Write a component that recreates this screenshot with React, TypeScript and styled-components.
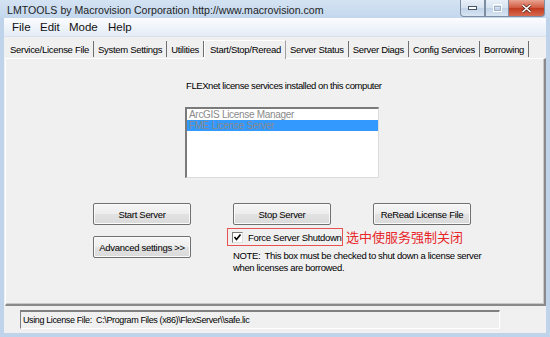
import React from 'react'
import styled, { createGlobalStyle } from 'styled-components'

const GlobalStyle = createGlobalStyle`
  html, body {
    margin: 0;
    padding: 0;
    background: #f0f0f0;
  }
  body {
    font-family: 'Liberation Sans', Arial, sans-serif;
  }
`

const Window = styled.div`
  width: 550px;
  height: 337px;
  box-sizing: border-box;
  display: flex;
  flex-direction: column;
  background: #bfd4ea;
  padding: 0 4px 4px 4px;
  overflow: hidden;
`

const TitleBar = styled.div`
  height: 18px;
  display: flex;
  align-items: center;
  justify-content: space-between;
  margin: 0 -4px;
  padding-left: 7px;
  background: linear-gradient(#d4e3f3, #c3d7ed);
`

const Title = styled.div`
  font-size: 10.6px;
  color: #1e1e1e;
  padding-top: 2px;
  white-space: nowrap;
`

const Controls = styled.div`
  display: flex;
  align-self: flex-start;
  margin-right: 5px;
`

const CtlButton = styled.div<{ $close?: boolean; $w: number }>`
  width: ${(p) => p.$w}px;
  height: 17px;
  box-sizing: border-box;
  border: 1px solid #7d8ea3;
  border-top: none;
  border-left-width: ${(p) => (p.$close ? 0 : 1)}px;
  display: flex;
  align-items: center;
  justify-content: center;
  background: ${(p) =>
    p.$close
      ? 'linear-gradient(#e8a493, #d1573c 50%, #c23a1f 51%, #d66a4e)'
      : 'linear-gradient(#e9f0f8, #d5e2f0 50%, #c1d3e8 51%, #d8e5f2)'};
  &:first-child {
    border-bottom-left-radius: 4px;
  }
  &:last-child {
    border-bottom-right-radius: 4px;
  }
`

const MenuBar = styled.div`
  height: 18px;
  display: flex;
  align-items: center;
  padding-left: 4px;
  background: linear-gradient(#fbfcfe, #e4ecf6);
  border-bottom: 1px solid #d8e1ec;
`

const MenuItem = styled.span<{ $w: number }>`
  font-size: 11.5px;
  color: #111;
  width: ${(p) => p.$w}px;
  padding-left: 4px;
  box-sizing: border-box;
`

const Client = styled.div`
  flex: 1;
  display: flex;
  flex-direction: column;
  background: #f0f0f0;
`

const TabRow = styled.div`
  height: 19px;
  display: flex;
  align-items: flex-end;
  padding-left: 2px;
  margin-top: 2px;
`

const Tab = styled.div<{ $active?: boolean }>`
  flex-shrink: 0;
  white-space: nowrap;
  font-size: 9.5px;
  letter-spacing: -0.3px;
  color: #000;
  box-sizing: border-box;
  height: ${(p) => (p.$active ? 19 : 16)}px;
  display: flex;
  align-items: center;
  padding: ${(p) => (p.$active ? '0 4px 2px 5px' : '0 4px 0 4px')};
  border-right: 1px solid ${(p) => (p.$active ? '#a0a0a0' : '#6f6f6f')};
  border-top: ${(p) => (p.$active ? '1px solid #ffffff' : 'none')};
  border-left: ${(p) => (p.$active ? '1px solid #ffffff' : 'none')};
  margin-bottom: ${(p) => (p.$active ? -1 : 1)}px;
  background: #f0f0f0;
  position: relative;
  z-index: ${(p) => (p.$active ? 2 : 1)};
`

const Panel = styled.div`
  height: 248px;
  box-sizing: border-box;
  border-top: 1px solid #ffffff;
  border-left: 1px solid #ffffff;
  border-right: 2px solid #8a8a8a;
  border-bottom: 2px solid #8a8a8a;
  box-shadow: inset -1px -1px 0 #c8c8c8;
  margin-left: 1px;
  padding-top: 21px;
  display: flex;
  flex-direction: column;
`

const ServiceBlock = styled.div`
  margin-left: 179px;
  width: 194px;
  display: flex;
  flex-direction: column;
`

const Caption = styled.div`
  font-size: 9.5px;
  letter-spacing: -0.42px;
  color: #000;
  white-space: nowrap;
  padding-left: 1px;
  height: 14px;
`

const ListBox = styled.div`
  margin-top: 13px;
  height: 71px;
  box-sizing: border-box;
  background: #fff;
  border-top: 2px solid #7a7a7a;
  border-left: 2px solid #7a7a7a;
  border-right: 1px solid #dcdcdc;
  border-bottom: 1px solid #dcdcdc;
`

const ListItem = styled.div<{ $selected?: boolean }>`
  height: 11px;
  line-height: 11px;
  font-size: 10px;
  letter-spacing: -0.3px;
  color: #8a8a8a;
  padding-left: 2px;
  background: ${(p) => (p.$selected ? '#3399ff' : 'transparent')};
  white-space: nowrap;
`

const ButtonGrid = styled.div`
  margin-top: 25px;
  margin-left: 87px;
  display: grid;
  grid-template-columns: 98px 98px 98px;
  column-gap: 42px;
`

const Button = styled.div<{ $top?: number }>`
  height: 22px;
  box-sizing: border-box;
  margin-top: ${(p) => p.$top ?? 0}px;
  border: 1px solid #707070;
  border-radius: 2px;
  background: linear-gradient(#f6f6f6, #ededed 50%, #e2e2e2 51%, #dadada);
  box-shadow: inset 0 0 0 1px #fbfbfb;
  display: flex;
  align-items: center;
  justify-content: center;
  font-size: 9.5px;
  letter-spacing: -0.3px;
  color: #000;
  white-space: nowrap;
`

const ForceArea = styled.div`
  grid-column: 2 / span 2;
  margin-left: -6px;
  margin-top: 3px;
  display: flex;
  flex-direction: column;
`

const ForceRow = styled.div`
  display: flex;
  align-items: center;
`

const RedBox = styled.div`
  width: 116px;
  height: 18px;
  box-sizing: border-box;
  border: 1px solid #e8514f;
  display: flex;
  align-items: center;
  padding-left: 4px;
  gap: 5px;
  font-size: 9.5px;
  letter-spacing: -0.3px;
  color: #000;
  white-space: nowrap;
`

const Check = styled.div`
  width: 11px;
  height: 11px;
  box-sizing: border-box;
  border-top: 1px solid #7a7a7a;
  border-left: 1px solid #7a7a7a;
  border-right: 1px solid #e0e0e0;
  border-bottom: 1px solid #e0e0e0;
  background: #fff;
  display: flex;
  align-items: center;
  justify-content: center;
`

const Annotation = styled.span`
  font-family: 'Noto Sans CJK SC', 'Noto Sans', sans-serif;
  font-size: 13px;
  color: #e8262a;
  margin-left: 3px;
  white-space: nowrap;
  line-height: 16px;
`

const Note = styled.div`
  margin-left: 6px;
  margin-top: 4px;
  font-size: 9.5px;
  letter-spacing: -0.36px;
  line-height: 12px;
  color: #000;
  white-space: nowrap;
`

const StatusBar = styled.div`
  flex: 1;
  display: flex;
  align-items: center;
  padding-left: 16px;
`

const StatusField = styled.div`
  width: 480px;
  height: 19px;
  box-sizing: border-box;
  border-top: 2px solid #808080;
  border-left: 1px solid #808080;
  border-right: 1px solid #ffffff;
  border-bottom: 1px solid #ffffff;
  display: flex;
  align-items: center;
  padding-left: 2px;
  font-size: 9px;
  letter-spacing: -0.38px;
  color: #000;
  white-space: nowrap;
`

const tabs = [
  'Service/License File',
  'System Settings',
  'Utilities',
  'Start/Stop/Reread',
  'Server Status',
  'Server Diags',
  'Config Services',
  'Borrowing',
]

const menus: [string, number][] = [
  ['File', 28],
  ['Edit', 29],
  ['Mode', 39],
  ['Help', 40],
]

export default function App() {
  return (
    <>
      <GlobalStyle />
      <Window>
        <TitleBar>
          <Title>LMTOOLS by Macrovision Corporation http://www.macrovision.com</Title>
          <Controls>
            <CtlButton $w={25}>
              <svg width="9" height="4" viewBox="0 0 9 4">
                <rect x="0.5" y="0.5" width="8" height="3" fill="#fff" stroke="#45556a" />
              </svg>
            </CtlButton>
            <CtlButton $w={24}>
              <svg width="9" height="8" viewBox="0 0 9 8">
                <rect x="0.5" y="0.5" width="8" height="7" fill="none" stroke="#fff" strokeWidth="1" />
                <rect x="1.5" y="2.5" width="6" height="4" fill="none" stroke="#9fb0c4" />
              </svg>
            </CtlButton>
            <CtlButton $w={36} $close>
              <svg width="11" height="9" viewBox="0 0 11 9">
                <path d="M1.5 1 L9.5 8 M9.5 1 L1.5 8" stroke="#5a2a20" strokeWidth="3" />
                <path d="M1.5 1 L9.5 8 M9.5 1 L1.5 8" stroke="#fff" strokeWidth="1.6" />
              </svg>
            </CtlButton>
          </Controls>
        </TitleBar>
        <MenuBar>
          {menus.map(([m, w]) => (
            <MenuItem key={m} $w={w}>
              {m}
            </MenuItem>
          ))}
        </MenuBar>
        <Client>
          <TabRow>
            {tabs.map((t) => (
              <Tab key={t} $active={t === 'Start/Stop/Reread'}>
                {t}
              </Tab>
            ))}
          </TabRow>
          <Panel>
            <ServiceBlock>
              <Caption>FLEXnet license services installed on this computer</Caption>
              <ListBox>
                <ListItem>ArcGIS License Manager</ListItem>
                <ListItem $selected>FME License Server</ListItem>
              </ListBox>
            </ServiceBlock>
            <ButtonGrid>
              <Button>Start Server</Button>
              <Button>Stop Server</Button>
              <Button>ReRead License File</Button>
              <Button $top={11}>Advanced settings &gt;&gt;</Button>
              <ForceArea>
                <ForceRow>
                  <RedBox>
                    <Check>
                      <svg width="9" height="9" viewBox="0 0 9 9">
                        <path d="M1.5 4 L3.5 6.5 L7.5 1.5" fill="none" stroke="#000" strokeWidth="1.6" />
                      </svg>
                    </Check>
                    Force Server Shutdown
                  </RedBox>
                  <Annotation>选中使服务强制关闭</Annotation>
                </ForceRow>
                <Note>
                  NOTE:&nbsp; This box must be checked to shut down a license server
                  <br />
                  when licenses are borrowed.
                </Note>
              </ForceArea>
            </ButtonGrid>
          </Panel>
          <StatusBar>
            <StatusField>Using License File:&nbsp; C:\Program Files (x86)\FlexServer\\safe.lic</StatusField>
          </StatusBar>
        </Client>
      </Window>
    </>
  )
}
